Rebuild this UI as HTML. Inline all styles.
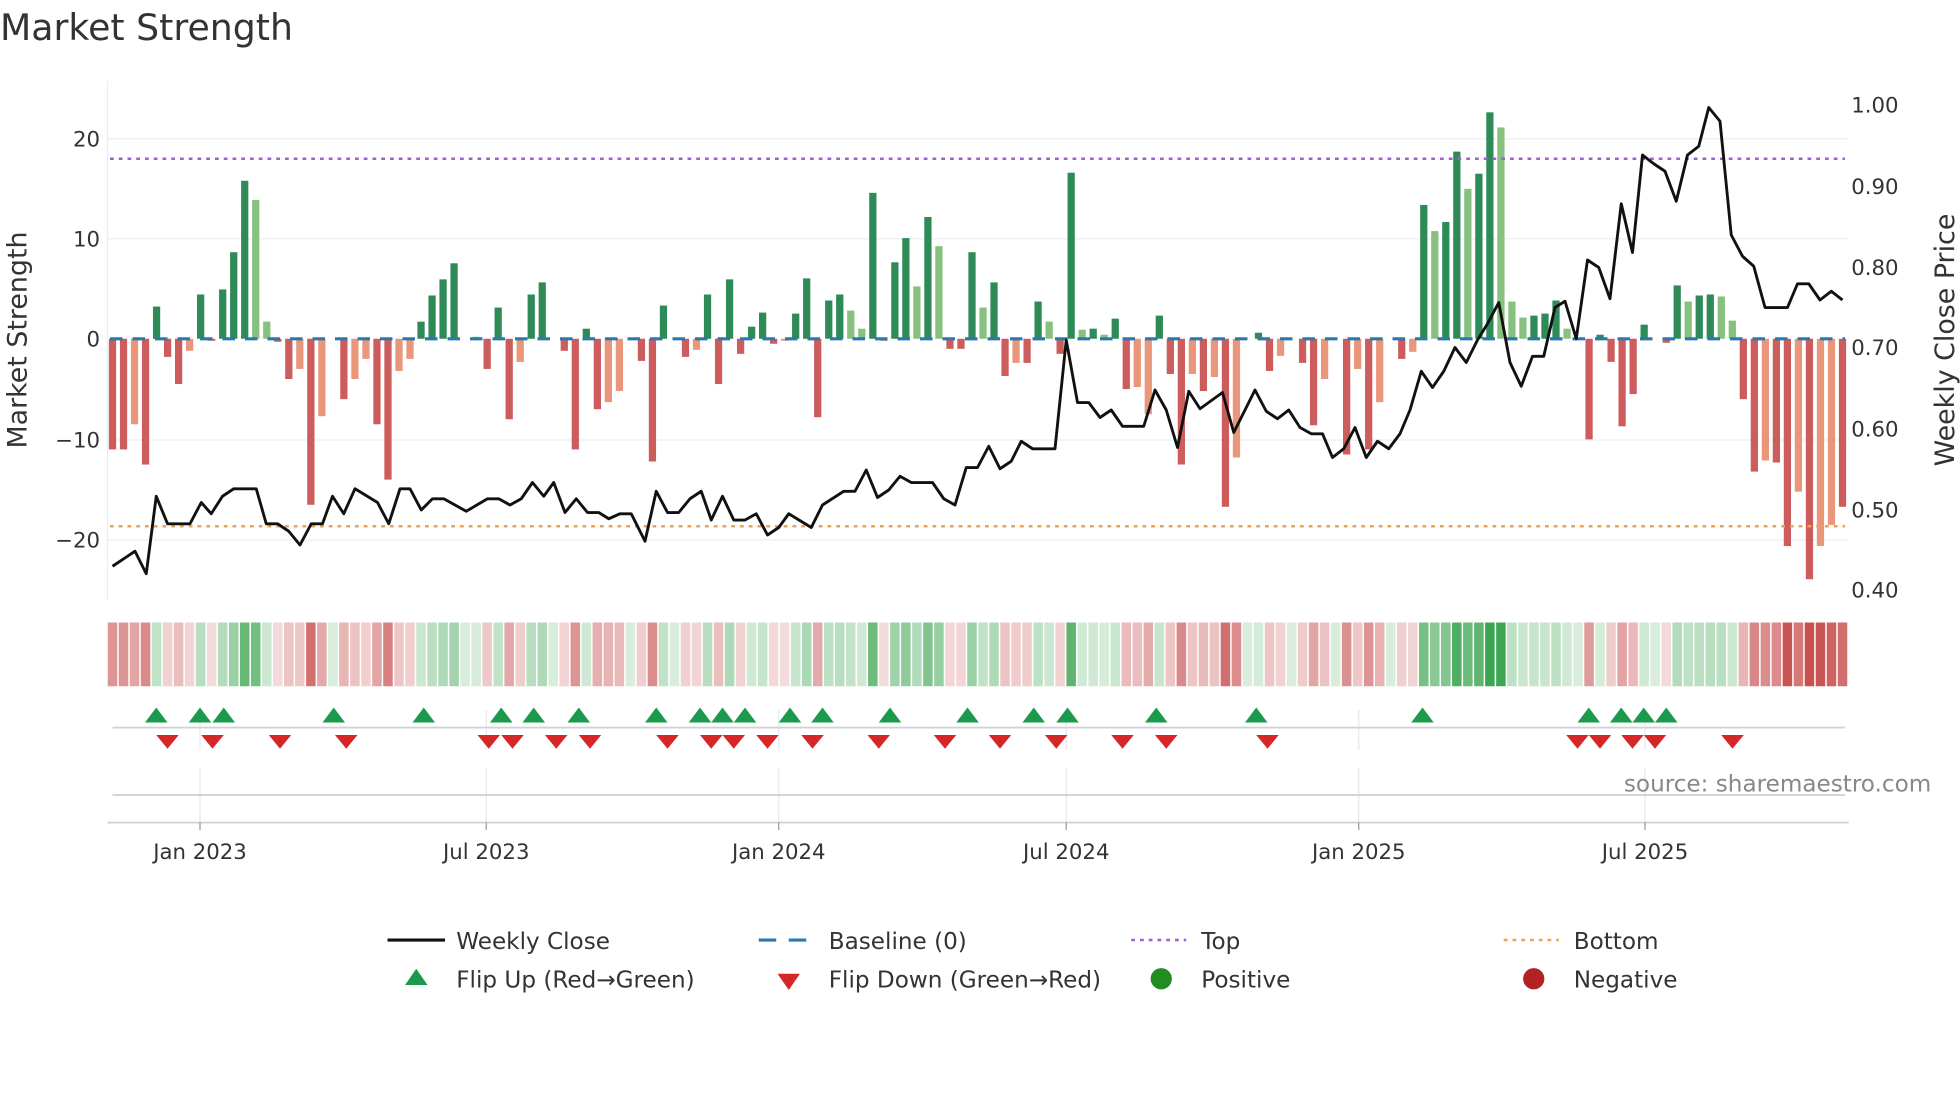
<!DOCTYPE html>
<html><head><meta charset="utf-8"><style>
html,body{margin:0;padding:0;background:#fff;width:1960px;height:1102px;overflow:hidden}
svg{display:block}
text{font-family:"DejaVu Sans","Liberation Sans",sans-serif;fill:#333}
</style></head><body>
<svg id="s" width="1960" height="1102" viewBox="0 0 1568 881.6" xmlns="http://www.w3.org/2000/svg">
<text x="0" y="32" font-size="29">Market Strength</text>
<g stroke="#eceef3" stroke-width="1">
<line x1="86" x2="1479" y1="111" y2="111"/><line x1="86" x2="1479" y1="191" y2="191"/>
<line x1="86" x2="1479" y1="352" y2="352"/><line x1="86" x2="1479" y1="432" y2="432"/>
</g>
<line x1="86" x2="86" y1="65" y2="480" stroke="#eceef3"/>
<g font-size="17" text-anchor="end">
<text x="80" y="117">20</text><text x="80" y="197">10</text><text x="80" y="277">0</text>
<text x="80" y="358">−10</text><text x="80" y="438">−20</text>
</g>
<g font-size="17">
<text x="1481" y="90">1.00</text><text x="1481" y="155">0.90</text><text x="1481" y="220">0.80</text>
<text x="1481" y="284">0.70</text><text x="1481" y="349">0.60</text><text x="1481" y="414">0.50</text><text x="1481" y="478">0.40</text>
</g>
<text transform="translate(21,272) rotate(-90)" font-size="21.5" text-anchor="middle">Market Strength</text>
<text transform="translate(1563,272) rotate(-90)" font-size="21.5" text-anchor="middle">Weekly Close Price</text>
<g id="bars"></g>
<line x1="88" x2="1476" y1="127" y2="127" stroke="#9b5fd6" stroke-width="2" stroke-dasharray="3,4"/>
<line x1="88" x2="1476" y1="421" y2="421" stroke="#f0a050" stroke-width="2" stroke-dasharray="3,4"/>
<line x1="88" x2="1476" y1="271" y2="271" stroke="#2a78b0" stroke-width="2.5" stroke-dasharray="10,8"/>
<polyline id="price" fill="none" stroke="#111" stroke-width="2.3" stroke-linejoin="round"/>
<g id="heat"></g>
<g stroke="#e6e8ec"><line x1="160" x2="160" y1="568" y2="600"/><line x1="389" x2="389" y1="568" y2="600"/><line x1="623" x2="623" y1="568" y2="600"/><line x1="853" x2="853" y1="568" y2="600"/><line x1="1087" x2="1087" y1="568" y2="600"/><line x1="1316" x2="1316" y1="568" y2="600"/>
<line x1="160" x2="160" y1="614" y2="658"/><line x1="389" x2="389" y1="614" y2="658"/><line x1="623" x2="623" y1="614" y2="658"/><line x1="853" x2="853" y1="614" y2="658"/><line x1="1087" x2="1087" y1="614" y2="658"/><line x1="1316" x2="1316" y1="614" y2="658"/></g>
<line x1="90" x2="1476" y1="582" y2="582" stroke="#cfd2d8" stroke-width="1.5"/>
<line x1="90" x2="1476" y1="636" y2="636" stroke="#cfd2d8" stroke-width="1.5"/>
<line x1="86" x2="1479" y1="658" y2="658" stroke="#cfd2d8" stroke-width="1.5"/>
<g stroke="#999"><line x1="160" x2="160" y1="658" y2="664"/><line x1="389" x2="389" y1="658" y2="664"/><line x1="623" x2="623" y1="658" y2="664"/><line x1="853" x2="853" y1="658" y2="664"/><line x1="1087" x2="1087" y1="658" y2="664"/><line x1="1316" x2="1316" y1="658" y2="664"/></g>
<g id="tri"></g>
<text x="1545" y="633" font-size="18.5" text-anchor="end" style="fill:#888">source: sharemaestro.com</text>
<g font-size="17" text-anchor="middle">
<text x="160" y="687">Jan 2023</text><text x="389" y="687">Jul 2023</text><text x="623" y="687">Jan 2024</text>
<text x="853" y="687">Jul 2024</text><text x="1087" y="687">Jan 2025</text><text x="1316" y="687">Jul 2025</text>
</g>
<g font-size="18.5">
<line x1="310" x2="356" y1="752" y2="752" stroke="#111" stroke-width="2.5"/><text x="365" y="759">Weekly Close</text>
<line x1="607" x2="651" y1="752" y2="752" stroke="#2a78b0" stroke-width="2.5" stroke-dasharray="14,10"/><text x="663" y="759">Baseline (0)</text>
<line x1="905" x2="949" y1="752" y2="752" stroke="#9b5fd6" stroke-width="2" stroke-dasharray="3,4"/><text x="961" y="759">Top</text>
<line x1="1203" x2="1247" y1="752" y2="752" stroke="#f0a050" stroke-width="2" stroke-dasharray="3,4"/><text x="1259" y="759">Bottom</text>
<polygon points="324,788 342,788 333,775" fill="#1a9a4a"/><text x="365" y="790">Flip Up (Red→Green)</text>
<polygon points="622,779 640,779 631,792" fill="#d62728"/><text x="663" y="790">Flip Down (Green→Red)</text>
<circle cx="929" cy="783" r="8.5" fill="#228b22"/><text x="961" y="790">Positive</text>
<circle cx="1227" cy="783" r="8.5" fill="#b22222"/><text x="1259" y="790">Negative</text>
</g>
</svg>
<script>
var NS="http://www.w3.org/2000/svg";
function el(t,a,p){var e=document.createElementNS(NS,t);for(var k in a)e.setAttribute(k,a[k]);p.appendChild(e);return e;}
var B=[[-11,'d'],[-11,'d'],[-8.5,'l'],[-12.5,'d'],[3.2,'d'],[-1.8,'d'],[-4.5,'d'],[-1.2,'l'],[4.4,'d'],[-0.2,'d'],[4.9,'d'],[8.6,'d'],[15.7,'d'],[13.8,'l'],[1.7,'l'],[-0.3,'d'],[-4,'d'],[-3,'l'],[-16.5,'d'],[-7.7,'l'],[0,'d'],[-6,'d'],[-4,'l'],[-2,'l'],[-8.5,'d'],[-14,'d'],[-3.2,'l'],[-2,'l'],[1.7,'d'],[4.3,'d'],[5.9,'d'],[7.5,'d'],[0,'d'],[0.2,'l'],[-3,'d'],[3.1,'d'],[-8,'d'],[-2.3,'l'],[4.4,'d'],[5.6,'d'],[0,'d'],[-1.2,'d'],[-11,'d'],[1,'d'],[-7,'d'],[-6.3,'l'],[-5.2,'l'],[0,'d'],[-2.2,'d'],[-12.2,'d'],[3.3,'d'],[0,'d'],[-1.8,'d'],[-1.1,'l'],[4.4,'d'],[-4.5,'d'],[5.9,'d'],[-1.5,'d'],[1.2,'d'],[2.6,'d'],[-0.5,'d'],[-0.2,'l'],[2.5,'d'],[6,'d'],[-7.8,'d'],[3.8,'d'],[4.4,'d'],[2.8,'l'],[1,'l'],[14.5,'d'],[-0.2,'d'],[7.6,'d'],[10,'d'],[5.2,'l'],[12.1,'d'],[9.2,'l'],[-1,'d'],[-1,'d'],[8.6,'d'],[3.1,'l'],[5.6,'d'],[-3.7,'d'],[-2.4,'l'],[-2.4,'d'],[3.7,'d'],[1.7,'l'],[-1.5,'d'],[16.5,'d'],[0.9,'l'],[1,'d'],[0.4,'l'],[2,'d'],[-5,'d'],[-4.8,'l'],[-7.5,'l'],[2.3,'d'],[-3.5,'d'],[-12.5,'d'],[-3.5,'l'],[-5.2,'d'],[-3.8,'l'],[-16.7,'d'],[-11.8,'l'],[0,'d'],[0.6,'d'],[-3.2,'d'],[-1.7,'l'],[0,'d'],[-2.4,'d'],[-8.6,'d'],[-4,'l'],[0,'d'],[-11.5,'d'],[-3,'l'],[-11,'d'],[-6.3,'l'],[0,'d'],[-2,'d'],[-1.3,'l'],[13.3,'d'],[10.7,'l'],[11.6,'d'],[18.6,'d'],[14.9,'l'],[16.4,'d'],[22.5,'d'],[21,'l'],[3.7,'l'],[2.1,'l'],[2.3,'d'],[2.5,'d'],[3.8,'d'],[1,'l'],[0,'d'],[-10,'d'],[0.4,'d'],[-2.3,'d'],[-8.7,'d'],[-5.5,'d'],[1.4,'d'],[0,'d'],[-0.4,'d'],[5.3,'d'],[3.7,'l'],[4.3,'d'],[4.4,'d'],[4.2,'l'],[1.8,'l'],[-6,'d'],[-13.2,'d'],[-12.1,'l'],[-12.3,'d'],[-20.6,'d'],[-15.2,'l'],[-23.9,'d'],[-20.6,'l'],[-18.5,'l'],[-16.7,'d']];
var n=B.length,x0=90,x1=1474,dx=(x1-x0)/(n-1);
var bars=document.getElementById('bars'),heat=document.getElementById('heat');
for(var i=0;i<n;i++){var v=B[i][0],s=B[i][1],x=x0+i*dx;
 var c=v>=0?(s=='d'?'#2e8b57':'#86c17f'):(s=='d'?'#cd5c5c':'#e9967a');
 var h=Math.abs(v)*8.05; if(h<0.5)h=0;
 if(h>0)el('rect',{x:x-2.9,y:v>=0?271-h:271,width:5.8,height:h,fill:c},bars);
 var a=Math.min(1,0.2+Math.abs(v)/20*0.75);
 var hc=v>=0?'rgba(60,165,80,'+a+')':'rgba(200,80,80,'+a+')';
 el('rect',{x:x-dx/2+0.6,y:498,width:dx-1.2,height:51,fill:hc},heat);}
var P=[[90,453],[108,441],[117,459],[125,397],[134,419],[152,419],[161,402],[169,411],[178,397],[187,391],[205,391],[213,419],[222,419],[231,425],[240,436],[249,419],[258,419],[266,397],[275,411],[284,391],[302,402],[311,419],[320,391],[328,391],[337,408],[346,399],[355,399],[373,409],[390,399],[399,399],[408,404],[417,399],[426,386],[435,397],[443,386],[452,410],[461,399],[470,410],[479,410],[487,415],[496,411],[505,411],[516,433],[525,393],[534,410],[543,410],[552,399],[561,393],[569,416],[578,397],[587,416],[596,416],[605,411],[614,428],[623,422],[631,411],[649,422],[658,404],[675,393],[684,393],[693,376],[702,398],[711,392],[720,381],[729,386],[746,386],[755,399],[764,404],[773,374],[782,374],[791,357],[800,375],[809,369],[817,353],[826,359],[844,359],[853,272],[862,322],[871,322],[880,334],[889,328],[898,341],[915,341],[924,312],[933,328],[942,358],[951,313],[960,327],[978,314],[987,346],[996,328],[1004,312],[1013,329],[1022,335],[1031,328],[1040,342],[1049,347],[1058,347],[1066,366],[1075,359],[1084,342],[1093,366],[1102,353],[1111,359],[1120,347],[1128,328],[1137,297],[1146,310],[1155,297],[1164,278],[1173,290],[1182,272],[1190,259],[1199,242],[1208,290],[1217,309],[1226,285],[1235,285],[1244,246],[1252,241],[1261,271],[1270,208],[1279,214],[1288,239],[1297,163],[1306,202],[1314,124],[1323,131],[1332,137],[1341,161],[1350,124],[1359,117],[1367,86],[1376,97],[1385,188],[1394,205],[1403,213],[1412,246],[1430,246],[1438,227],[1447,227],[1456,240],[1465,233],[1474,240]];
document.getElementById('price').setAttribute('points',P.map(function(p){return p.join(',')}).join(' '));
var T=document.getElementById('tri');
[125,160,179,267,339,401,427,463,525,560,578,596,632,658,712,774,827,854,925,1005,1138,1271,1297,1315,1333].forEach(function(x){el('polygon',{points:(x-9)+',578 '+(x+9)+',578 '+x+',566',fill:'#1a9a4a'},T);});
[134,170,224,277,391,410,445,472,534,569,587,614,650,703,756,800,845,898,933,1014,1262,1280,1306,1324,1386].forEach(function(x){el('polygon',{points:(x-9)+',588 '+(x+9)+',588 '+x+',599',fill:'#d62728'},T);});
</script>
</body></html>
